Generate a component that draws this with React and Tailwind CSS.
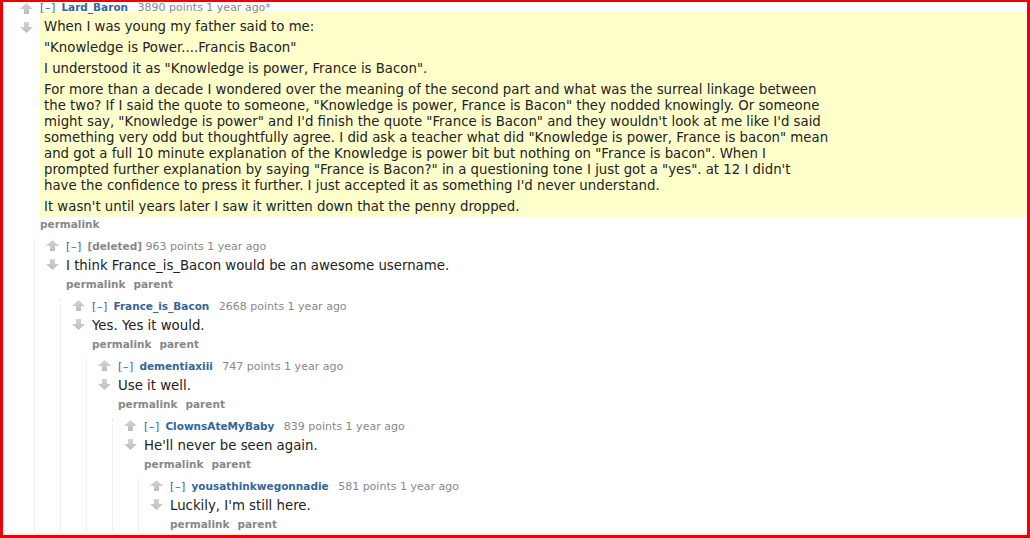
import React from "react";

const FONT = { fontFamily: '"DejaVu Sans", Verdana, sans-serif' };

function Arrow({ dir }) {
  const id = dir === "up" ? "gu" : "gd";
  const pts =
    dir === "up"
      ? "6.5,0 13,6 9,6 9,11 4,11 4,6 0,6"
      : "4,0 9,0 9,5 13,5 6.5,11 0,5 4,5";
  return (
    <svg width="13" height="11" viewBox="0 0 13 11" className="block">
      <defs>
        <linearGradient id={id} x1="0" y1="0" x2="0" y2="1">
          <stop offset="0" stopColor="#d4d4d4" />
          <stop offset="1" stopColor="#bcbcbc" />
        </linearGradient>
      </defs>
      <polygon points={pts} fill={`url(#${id})`} />
    </svg>
  );
}

function ArrowCol() {
  return (
    <div className="w-[13px] shrink-0 flex flex-col pt-[1px] gap-[8px]">
      <Arrow dir="up" />
      <Arrow dir="down" />
    </div>
  );
}

function Tagline({ c, top }) {
  return (
    <div
      className={`${top ? "h-[10px] leading-[10px]" : "h-[14px] leading-[14px]"} text-[11px] whitespace-nowrap text-[#888]`}
    >
      <span className="text-[#369] tracking-[0.6px] mr-[2px]">[–]</span>{" "}
      {c.author ? (
        <span className="font-bold text-[10.5px] text-[#369] mr-[6px]">{c.author}</span>
      ) : (
        <span className="font-bold text-[10.5px] text-[#888]">[deleted]</span>
      )}{" "}
      <span>
        {c.points} points 1 year ago{c.star ? "*" : ""}
      </span>
    </div>
  );
}

function Buttons({ parent }) {
  return (
    <div className="h-[14px] leading-[14px] text-[10.5px] font-bold text-[#888] flex gap-[8px] whitespace-nowrap">
      <span>permalink</span>
      {parent && <span>parent</span>}
    </div>
  );
}

const longLines = [
  "For more than a decade I wondered over the meaning of the second part and what was the surreal linkage between",
  'the two? If I said the quote to someone, "Knowledge is power, France is Bacon" they nodded knowingly. Or someone',
  'might say, "Knowledge is power" and I\'d finish the quote "France is Bacon" and they wouldn\'t look at me like I\'d said',
  'something very odd but thoughtfully agree. I did ask a teacher what did "Knowledge is power, France is bacon" mean',
  'and got a full 10 minute explanation of the Knowledge is power bit but nothing on "France is bacon". When I',
  'prompted further explanation by saying "France is Bacon?" in a questioning tone I just got a "yes". at 12 I didn\'t',
  "have the confidence to press it further. I just accepted it as something I'd never understand.",
];

const replies = [
  { author: null, points: 963, text: "I think France_is_Bacon would be an awesome username." },
  { author: "France_is_Bacon", points: 2668, text: "Yes. Yes it would." },
  { author: "dementiaxiii", points: 747, text: "Use it well." },
  { author: "ClownsAteMyBaby", points: 839, text: "He'll never be seen again." },
  { author: "yousathinkwegonnadie", points: 581, text: "Luckily, I'm still here." },
];

function Reply({ idx }) {
  const c = replies[idx];
  return (
    <div>
      <div className="flex">
        <ArrowCol />
        <div className="ml-[7px] flex-1 min-w-0">
          <Tagline c={c} />
          <div className="mt-[5px] h-[16px] leading-[16px] text-[13.3px] text-[#222] whitespace-nowrap">
            {c.text}
          </div>
          <div className="mt-[3px]">
            <Buttons parent />
          </div>
        </div>
      </div>
      {idx + 1 < replies.length && (
        <div className="ml-[14px] mt-[8px] border-l border-dotted border-[#e2e2ea] pl-[11px]">
          <Reply idx={idx + 1} />
        </div>
      )}
    </div>
  );
}

export default function App() {
  return (
    <div
      className="w-[1030px] h-[538px] overflow-hidden bg-white border-solid border-[#ee0000] border-t-[2px] border-l-[3px] border-r-[3px] border-b-[3px] pl-[17px] pr-[1px]"
      style={FONT}
    >
      <div className="flex">
        <ArrowCol />
        <div className="ml-[7px] flex-1 min-w-0">
          <Tagline c={{ author: "Lard_Baron", points: 3890, star: true }} top />
          <div className="bg-[#ffffcc] pt-[7px] pb-[2px] pl-[4px] text-[13.3px] leading-[16px] text-[#222] whitespace-nowrap flex flex-col gap-[5px]">
            <p>When I was young my father said to me:</p>
            <p>"Knowledge is Power....Francis Bacon"</p>
            <p>I understood it as "Knowledge is power, France is Bacon".</p>
            <p>
              {longLines.map((l, i) => (
                <React.Fragment key={i}>
                  {l}
                  {i < longLines.length - 1 && <br />}
                </React.Fragment>
              ))}
            </p>
            <p>It wasn't until years later I saw it written down that the penny dropped.</p>
          </div>
          <Buttons />
        </div>
      </div>
      <div className="ml-[14px] mt-[8px] border-l border-dotted border-[#e2e2ea] pl-[11px]">
        <Reply idx={0} />
      </div>
    </div>
  );
}
